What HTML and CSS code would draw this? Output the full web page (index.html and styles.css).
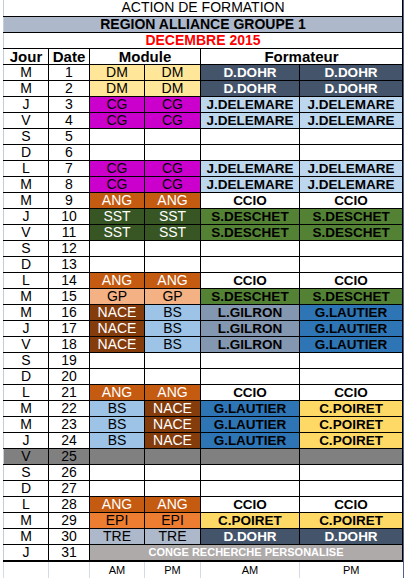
FILE: index.html
```html
<!DOCTYPE html>
<html lang="fr">

<head>
  <meta charset="UTF-8">
  <meta name="viewport" content="width=device-width, initial-scale=1.0">
  <title>Planning formation</title>
  <link rel="stylesheet" href="styles.css">
</head>

<body>
  <div class="sheet">
    <table class="planning">
      <colgroup>
        <col class="c-jour">
        <col class="c-date">
        <col class="c-mod">
        <col class="c-mod2">
        <col class="c-form">
        <col class="c-form2">
      </colgroup>
      <tr class="title">
        <td colspan="6" class="t-action">ACTION DE FORMATION</td>
      </tr>
      <tr class="title">
        <td colspan="6" class="t-region">REGION ALLIANCE GROUPE 1</td>
      </tr>
      <tr class="title">
        <td colspan="6" class="t-mois">DECEMBRE 2015</td>
      </tr>
      <tr class="head">
        <td>Jour</td>
        <td>Date</td>
        <td colspan="2">Module</td>
        <td colspan="2">Formateur</td>
      </tr>

      <tr><td>M</td><td>1</td><td class="m dm">DM</td><td class="m dm">DM</td><td class="f dohr">D.DOHR</td><td class="f dohr">D.DOHR</td></tr>
      <tr><td>M</td><td>2</td><td class="m dm">DM</td><td class="m dm">DM</td><td class="f dohr">D.DOHR</td><td class="f dohr">D.DOHR</td></tr>
      <tr><td>J</td><td>3</td><td class="m cg">CG</td><td class="m cg">CG</td><td class="f dele">J.DELEMARE</td><td class="f dele">J.DELEMARE</td></tr>
      <tr><td>V</td><td>4</td><td class="m cg">CG</td><td class="m cg">CG</td><td class="f dele">J.DELEMARE</td><td class="f dele">J.DELEMARE</td></tr>
      <tr><td>S</td><td>5</td><td></td><td></td><td></td><td></td></tr>
      <tr><td>D</td><td>6</td><td></td><td></td><td></td><td></td></tr>
      <tr><td>L</td><td>7</td><td class="m cg">CG</td><td class="m cg">CG</td><td class="f dele">J.DELEMARE</td><td class="f dele">J.DELEMARE</td></tr>
      <tr><td>M</td><td>8</td><td class="m cg">CG</td><td class="m cg">CG</td><td class="f dele">J.DELEMARE</td><td class="f dele">J.DELEMARE</td></tr>
      <tr><td>M</td><td>9</td><td class="m ang">ANG</td><td class="m ang">ANG</td><td class="f">CCIO</td><td class="f">CCIO</td></tr>
      <tr><td>J</td><td>10</td><td class="m sst">SST</td><td class="m sst">SST</td><td class="f desc">S.DESCHET</td><td class="f desc">S.DESCHET</td></tr>
      <tr><td>V</td><td>11</td><td class="m sst">SST</td><td class="m sst">SST</td><td class="f desc">S.DESCHET</td><td class="f desc">S.DESCHET</td></tr>
      <tr><td>S</td><td>12</td><td></td><td></td><td></td><td></td></tr>
      <tr><td>D</td><td>13</td><td></td><td></td><td></td><td></td></tr>
      <tr><td>L</td><td>14</td><td class="m ang">ANG</td><td class="m ang">ANG</td><td class="f">CCIO</td><td class="f">CCIO</td></tr>
      <tr><td>M</td><td>15</td><td class="m gp">GP</td><td class="m gp">GP</td><td class="f desc">S.DESCHET</td><td class="f desc">S.DESCHET</td></tr>
      <tr><td>M</td><td>16</td><td class="m nace">NACE</td><td class="m bs">BS</td><td class="f gil">L.GILRON</td><td class="f laut">G.LAUTIER</td></tr>
      <tr><td>J</td><td>17</td><td class="m nace">NACE</td><td class="m bs">BS</td><td class="f gil">L.GILRON</td><td class="f laut">G.LAUTIER</td></tr>
      <tr><td>V</td><td>18</td><td class="m nace">NACE</td><td class="m bs">BS</td><td class="f gil">L.GILRON</td><td class="f laut">G.LAUTIER</td></tr>
      <tr><td>S</td><td>19</td><td></td><td></td><td></td><td></td></tr>
      <tr><td>D</td><td>20</td><td></td><td></td><td></td><td></td></tr>
      <tr><td>L</td><td>21</td><td class="m ang">ANG</td><td class="m ang">ANG</td><td class="f">CCIO</td><td class="f">CCIO</td></tr>
      <tr><td>M</td><td>22</td><td class="m bs">BS</td><td class="m nace">NACE</td><td class="f laut">G.LAUTIER</td><td class="f poir">C.POIRET</td></tr>
      <tr><td>M</td><td>23</td><td class="m bs">BS</td><td class="m nace">NACE</td><td class="f laut">G.LAUTIER</td><td class="f poir">C.POIRET</td></tr>
      <tr><td>J</td><td>24</td><td class="m bs">BS</td><td class="m nace">NACE</td><td class="f laut">G.LAUTIER</td><td class="f poir">C.POIRET</td></tr>
      <tr class="ferie"><td>V</td><td>25</td><td></td><td></td><td></td><td></td></tr>
      <tr><td>S</td><td>26</td><td></td><td></td><td></td><td></td></tr>
      <tr><td>D</td><td>27</td><td></td><td></td><td></td><td></td></tr>
      <tr><td>L</td><td>28</td><td class="m ang">ANG</td><td class="m ang">ANG</td><td class="f">CCIO</td><td class="f">CCIO</td></tr>
      <tr><td>M</td><td>29</td><td class="m epi">EPI</td><td class="m epi">EPI</td><td class="f poir">C.POIRET</td><td class="f poir">C.POIRET</td></tr>
      <tr><td>M</td><td>30</td><td class="m tre">TRE</td><td class="m tre">TRE</td><td class="f dohr">D.DOHR</td><td class="f dohr">D.DOHR</td></tr>
      <tr class="last"><td>J</td><td>31</td><td colspan="4" class="conge">CONGE RECHERCHE PERSONALISE</td></tr>

      <tr class="foot">
        <td></td><td></td><td>AM</td><td>PM</td><td>AM</td><td>PM</td>
      </tr>
    </table>
    <div class="edge"></div>
  </div>
</body>

</html>
```

FILE: styles.css
```css
* {
  box-sizing: border-box;
}

body {
  margin: 0;
  background-color: #fff;
  font-family: "Liberation Sans", Arial, sans-serif;
  color: #000;
}

.sheet {
  display: flex;
  padding-left: 3px;
  height: 578px;
  overflow: hidden;
}

.edge {
  width: 2px;
  background-color: #4d6388;
}

.planning {
  border-collapse: collapse;
  table-layout: fixed;
  width: 399px;
}

.c-jour { width: 45px; }
.c-date { width: 41px; }
.c-mod { width: 55px; }
.c-mod2 { width: 56px; }
.c-form { width: 99px; }
.c-form2 { width: 103px; }

.planning td {
  border: 1px solid #000;
  height: 16px;
  padding: 0;
  text-align: center;
  line-height: 15px;
  font-size: 14px;
  white-space: nowrap;
  overflow: hidden;
}

.planning td:first-child {
  border-left: 1px solid #c4cedb;
}

/* titre */
.title td {
  border-top: none;
}

.t-action {
  font-size: 14px;
}

.t-region {
  background-color: #adb9ca;
  font-weight: bold;
  font-size: 15px;
}

.t-mois {
  color: #ff0000;
  font-weight: bold;
  font-size: 15px;
}

.head td {
  font-weight: bold;
  font-size: 15px;
}

/* formateurs */
.planning td.f {
  font-weight: bold;
  font-size: 13.5px;
}

.dm { background-color: #ffe699; }
.cg { background-color: #cc00cc; }
.ang { background-color: #c55a11; color: #fff; }
.sst { background-color: #375623; color: #fff; }
.gp { background-color: #f4b183; }
.nace { background-color: #843c0c; color: #fff; }
.bs { background-color: #9dc3e6; }
.epi { background-color: #ed7d31; }
.tre { background-color: #adb9ca; }

.dohr { background-color: #44546a; color: #fff; }
.dele { background-color: #bdd7ee; }
.desc { background-color: #548235; }
.gil { background-color: #8497b0; }
.laut { background-color: #2e75b6; }
.poir { background-color: #ffd966; }

.ferie td {
  background-color: #808080;
}

.planning td.conge {
  background-color: #aeaaaa;
  color: #fff;
  font-weight: bold;
  font-size: 11px;
}

.last td {
  border-bottom: 2px solid #000;
}

.planning .foot td {
  border: none;
  border-left: 1px solid #d4dbe6;
  border-bottom: 1px solid #d4dbe6;
  font-size: 11px;
  height: 17px;
  line-height: 17px;
}
```
